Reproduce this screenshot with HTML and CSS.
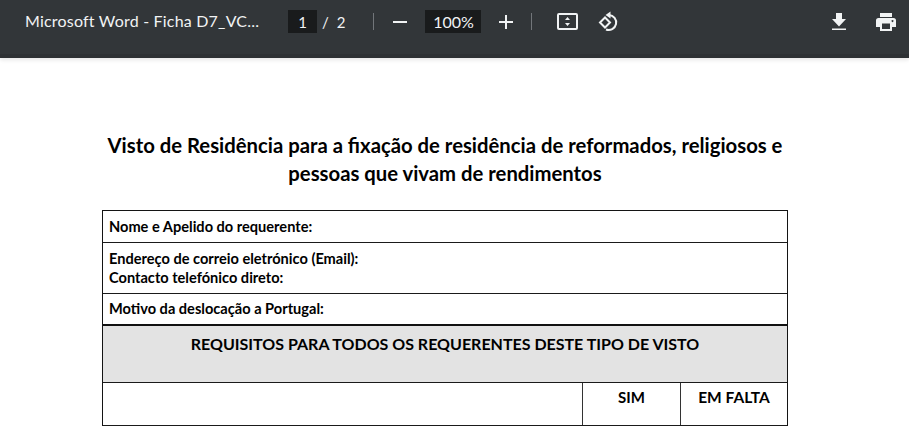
FILE: index.html
```html
<!DOCTYPE html>
<html lang="pt">
<head>
  <meta charset="UTF-8" />
  <title>Microsoft Word - Ficha D7_VC</title>
  <link rel="stylesheet" href="styles.css">
</head>
<body>
  <div class="toolbar">
    <div class="doc-title">Microsoft Word - Ficha D7_VC...</div>
    <div class="pager">
      <span class="field page-field">1</span>
      <span class="slash">/</span>
      <span class="total">2</span>
    </div>
    <span class="sep sep-one"></span>
    <svg class="icon minus" width="14" height="16" viewBox="0 0 14 16"><path d="M0 8h14" /></svg>
    <span class="field zoom-field">100%</span>
    <svg class="icon plus" width="14" height="14" viewBox="0 0 14 14"><path d="M0 7h14M7 0v14" /></svg>
    <span class="sep sep-two"></span>
    <svg class="icon fit" width="21" height="17" viewBox="0 0 21 17">
      <rect x="1" y="1" width="19" height="15" rx="1" />
      <path class="solid" d="M10.500 4l2.500 3h-5zM10.500 13l-2.500-3h5z" />
    </svg>
    <svg class="icon rotate" width="21" height="21" viewBox="0 0 21 21">
      <path d="M7 6.500l-5 5 5 5 5-5z" />
      <path d="M11 4a7.500 7.500 0 1 1-3 14.500" />
      <path class="solid" d="M12.500 0.500v7l-5-3.500z" />
    </svg>
    <div class="actions">
      <svg class="icon-solid" width="14" height="17" viewBox="0 0 14 17"><path d="M4 0h6v6h4l-7 7.500-7-7.500h4zM0 15.500h14v1.500h-14z" /></svg>
      <svg class="icon-solid" width="20" height="18" viewBox="0 0 20 18"><path d="M4 0h12v4h-12zM2.500 5h15a2.500 2.500 0 0 1 2.500 2.500v6.500h-4v4h-12v-4h-4v-6.500a2.500 2.500 0 0 1 2.500-2.500zM6 10.500v5.500h8v-5.500zM16.500 7a1 1 0 1 0 .01 0z" fill-rule="evenodd" /></svg>
    </div>
  </div>

  <div class="page">
    <h1>Visto de Residência para a fixação de residência de reformados, religiosos e<br>pessoas que vivam de rendimentos</h1>
    <div class="form-table">
      <div class="row row-name">Nome e Apelido do requerente:</div>
      <div class="row row-contact">Endereço de correio eletrónico (Email):<br>Contacto telefónico direto:</div>
      <div class="row row-motive">Motivo da deslocação a Portugal:</div>
      <div class="row row-head">REQUISITOS PARA TODOS OS REQUERENTES DESTE TIPO DE VISTO</div>
      <div class="row row-cols">
        <div class="col col-main"></div>
        <div class="col col-sim">SIM</div>
        <div class="col col-falta">EM FALTA</div>
      </div>
    </div>
  </div>
</body>
</html>
```

FILE: styles.css
```css
html, body {
  margin: 0;
  height: 100%;
  overflow: hidden;
}

body {
  background: #fff;
  font-family: Lato, "Open Sans", sans-serif;
}

.toolbar {
  height: 54px;
  background: #323639;
  border-bottom: 4px solid #2e3134;
  box-shadow: 0 2px 4px rgba(0,0,0,0.1);
  display: flex;
  align-items: flex-start;
  color: #f1f3f4;
  padding-left: 25px;
}

.doc-title {
  width: 263px;
  padding-top: 11px;
  font-size: 16px;
  line-height: 20px;
  letter-spacing: 0.2px;
  white-space: nowrap;
}

.pager {
  display: flex;
  align-items: center;
  height: 23px;
  margin-top: 10px;
  font-size: 15px;
}

.field {
  background: #191b1c;
  height: 23px;
  line-height: 24px;
  text-align: center;
  font-size: 15px;
  display: block;
}

.page-field {
  width: 29px;
}

.slash {
  margin-left: 5px;
}

.total {
  margin-left: 8px;
}

.sep {
  width: 1px;
  height: 17px;
  margin-top: 13px;
  background: #72767a;
}

.sep-one {
  margin-left: 28px;
}

.icon {
  fill: none;
  stroke: #f1f3f4;
  stroke-width: 2;
  flex: none;
}

.icon .solid {
  fill: #f1f3f4;
  stroke: none;
}

.minus {
  margin: 14px 0 0 19px;
}

.zoom-field {
  width: 56px;
  margin: 10px 0 0 18px;
  font-size: 16px;
}

.plus {
  margin: 15px 0 0 18px;
}

.sep-two {
  margin-left: 18px;
}

.fit {
  margin: 13px 0 0 25px;
}

.rotate {
  margin: 11px 0 0 20px;
}

.actions {
  margin-left: auto;
  display: flex;
  gap: 30px;
  margin-top: 13px;
  padding-right: 13px;
}

.icon-solid {
  fill: #f1f3f4;
  display: block;
}

.page {
  padding: 73px 0 0 102px;
  color: #000;
}

h1 {
  width: 686px;
  margin: 0 0 23px;
  text-align: center;
  font-size: 20.300px;
  line-height: 28px;
  font-weight: 700;
}

.form-table {
  width: 684px;
  border: 1px solid #141414;
  border-bottom: 0;
  font-size: 14.600px;
  font-weight: 700;
}

.row {
  box-sizing: border-box;
  padding-left: 6px;
  border-bottom: 1px solid #1a1a1a;
  line-height: 17px;
}

.row-name {
  height: 32px;
  padding-top: 7px;
}

.row-contact {
  height: 51px;
  padding-top: 6px;
  line-height: 19px;
}

.row-motive {
  height: 32px;
  padding-top: 6px;
  border-bottom: 2px solid #111;
}

.row-head {
  height: 57px;
  padding: 7px 0 0;
  background: #e3e3e3;
  text-align: center;
  font-size: 16px;
  line-height: 22px;
}

.row-cols {
  height: 43px;
  padding: 0;
  display: flex;
}

.col {
  text-align: center;
  padding-top: 6px;
  line-height: 17px;
  font-size: 15px;
}

.col-main {
  flex: 1;
}

.col-sim {
  width: 97px;
  border-left: 1px solid #333;
}

.col-falta {
  width: 106px;
  border-left: 1px solid #333;
  font-size: 15.500px;
}
```
